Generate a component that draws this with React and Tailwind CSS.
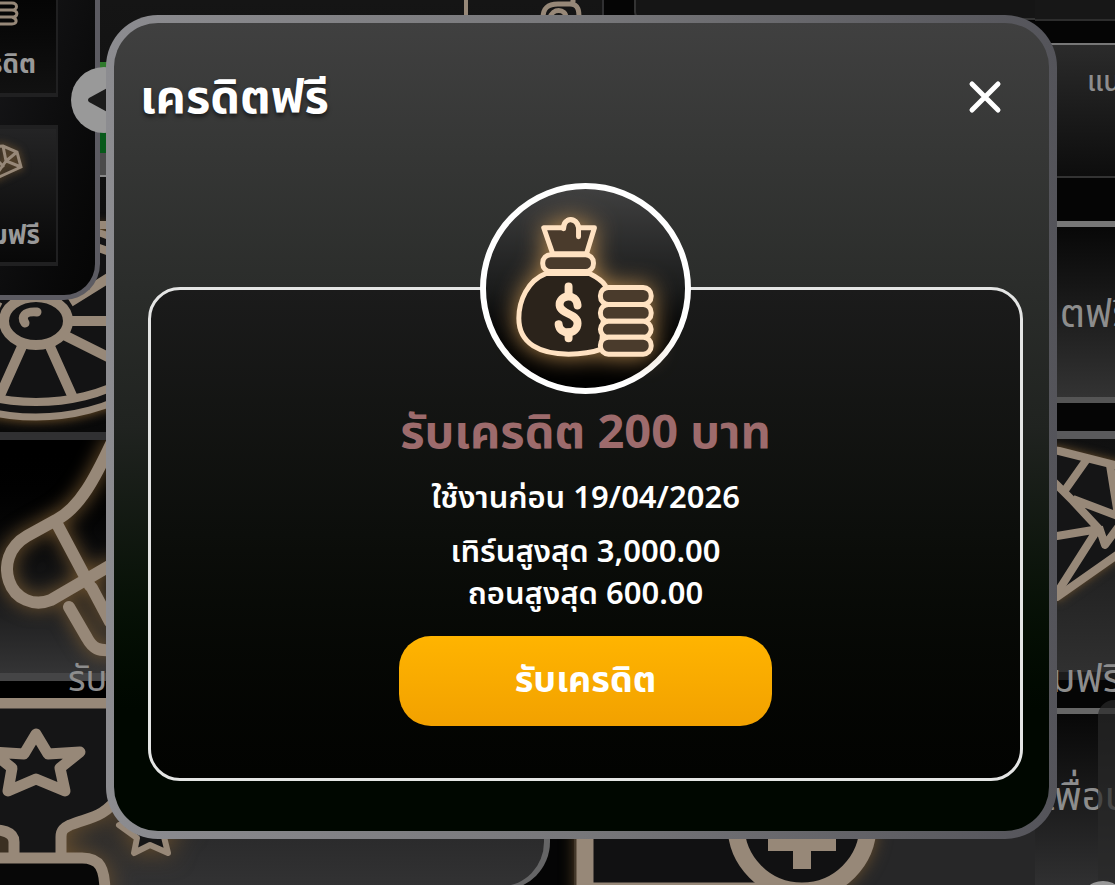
import React from "react";

const details = ["เทิร์นสูงสุด 3,000.00", "ถอนสูงสุด 600.00"];

function MoneyBagIcon() {
  return (
    <svg viewBox="0 0 200 200" className="w-full h-full overflow-visible" aria-hidden="true">
      <g
        className="drop-shadow-[0_0_12px_#b98b50]"
        fill="#4a3b2c"
        stroke="#ffe2c2"
        strokeWidth="5"
        strokeLinecap="round"
        strokeLinejoin="round"
      >
        <path d="M60 85C42 92 33 112 33 130c0 26 22 36 50 36 14 0 25-2 33-5l4-64c-4-6-10-9-16-12z" fill="#2b231b" />
        <path d="M67 65l-9-26h20c0-11 14-11 15 0h16l-8 26z" />
        <path d="M78 40c0-13 14-11 15-1v9" fill="none" />
        <rect x="57" y="66" width="51" height="17" rx="8" />
        <rect x="115" y="99" width="51" height="17" rx="8" />
        <rect x="115" y="116" width="51" height="17" rx="8" />
        <rect x="115" y="133" width="51" height="16" rx="8" />
        <rect x="115" y="149" width="51" height="17" rx="8" />
        <path d="M92 117c-1-13-19-11-18 0 1 9 18 8 18 18 0 12-18 12-19 1" fill="none" strokeWidth="8" />
        <path d="M83 98v8M83 144v6" fill="none" strokeWidth="8" />
      </g>
    </svg>
  );
}

function WheelArt() {
  return (
    <svg viewBox="0 0 110 240" className="w-[110px] h-[240px] overflow-visible" aria-hidden="true">
      <g className="drop-shadow-[0_2px_5px_#5e4524]" fill="#131314" stroke="#978878" strokeWidth="8">
        <path d="M90 33h20M90 55h20" />
        <ellipse cx="36" cy="128" rx="145" ry="97" strokeWidth="7" />
        <ellipse cx="36" cy="128" rx="132" ry="82" />
        <path d="M70 110l45-28M72 129h40M62 142l50 25M48 150l26 58M24 150l-26 58M0 116l-20-10" strokeWidth="10" />
        <ellipse cx="36" cy="129" rx="32" ry="24" strokeWidth="10" />
        <path d="M37 120c-13-1-16 5-12 11" fill="none" strokeWidth="9" strokeLinecap="round" />
      </g>
    </svg>
  );
}

function RevolverArt() {
  return (
    <svg viewBox="0 0 110 240" className="w-[110px] h-[240px] overflow-visible" aria-hidden="true">
      <g
        className="drop-shadow-[0_0_9px_#7d5d33]"
        fill="none"
        stroke="#978878"
        strokeWidth="12"
        strokeLinecap="round"
        strokeLinejoin="round"
      >
        <path d="M112 2C96 36 80 68 56 80L27 96C8 107 4 126 9 141c6 18 25 26 42 19l60-35M56 82l34 64M69 167l18 31c6 11 12 13 24 12M92 148l18 34" />
      </g>
    </svg>
  );
}

function TrophyArt() {
  return (
    <svg viewBox="0 0 200 187" className="w-[200px] h-[187px] overflow-visible" aria-hidden="true">
      <g
        className="drop-shadow-[0_0_12px_#6b502d]"
        fill="#151516"
        stroke="#978878"
        strokeWidth="11"
        strokeLinejoin="round"
      >
        <path d="M-20 5h140v92c-16 23-30 22-50 30-6 3-9 5-9 12v23h-80z" />
        <path d="M14 162v-18c0-10-10-13-34-13v31z" fill="#3b3022" />
        <path d="M-20 160H82c18 0 23 10 23 35H-20z" fill="#070707" />
        <path d="M36 36l12 20 32-2-20 16 5 23-29-12L8 93l4-23-20-16 32 2z" />
        <path d="M149 98l9 25 26 2-20 14 4 16-18-8-16 8 3-15-18-13 23-3z" strokeWidth="6" />
      </g>
    </svg>
  );
}

function DiamondArt() {
  return (
    <svg viewBox="0 0 80 170" className="w-20 h-[170px] overflow-visible" aria-hidden="true">
      <g className="drop-shadow-[0_0_5px_#6b502d]" fill="#151516" stroke="#978878" strokeWidth="8" strokeLinejoin="round">
        <path d="M-20 8l28 4 72 18v76L6 158l-26-30z" />
        <path
          d="M36 20L12 54M2 42l20 20 26 28-54 9M22 60l58 22M59 26l8 50M48 88L6 154M48 88l6 18 22-30"
          fill="none"
        />
      </g>
    </svg>
  );
}

function BadgeArt() {
  return (
    <svg viewBox="0 0 330 60" className="w-[330px] h-[60px] overflow-visible" aria-hidden="true">
      <g className="drop-shadow-[0_0_8px_#6b502d]" fill="#111112" stroke="#978878">
        <path d="M11-20h200V66H11z" strokeWidth="17" />
        <circle cx="228" cy="0" r="66" strokeWidth="17" />
        <path d="M194 17h68M228 10v34" strokeWidth="18" />
      </g>
    </svg>
  );
}

// casino lobby that sits dimmed behind the dialog
function Lobby() {
  return (
    <div className="absolute inset-0 flex gap-6 overflow-hidden bg-[#050505] text-[#8d8d8d]" aria-hidden="true">
      {/* left column */}
      <div className="flex w-[550px] shrink-0 flex-col">
        <div className="flex h-[440px] w-[604px] shrink-0 flex-col justify-between border-r-2 border-b-8 border-[#303032] bg-gradient-to-b from-[#151515] to-[#090909]">
          <div className="flex h-4 items-start justify-end gap-[72px] pr-5">
            <div className="h-4 w-1 bg-[#978878]" />
            <svg viewBox="0 0 42 16" className="h-4 w-[42px] overflow-visible">
              <path d="M3 18C3 8 8 4 18 4h12c9 0 9 8 9 14M10 18c2-10 16-10 16 0M33 0v4" fill="none" stroke="#978878" strokeWidth="5" />
            </svg>
          </div>
          <WheelArt />
        </div>
        <div className="flex h-[241px] shrink-0 overflow-hidden border-b-8 border-[#454546] bg-gradient-to-b from-black to-[#343435]">
          <RevolverArt />
        </div>
        <div className="relative z-10 flex h-[17px] shrink-0 items-end bg-black pl-[68px]">
          <span className="text-4xl leading-9">รับโบนัส</span>
        </div>
        <div className="flex h-[192px] shrink-0 overflow-hidden rounded-br-[48px] border-r-[6px] border-b-4 border-[#656566] bg-gradient-to-b from-[#171718] to-[#323233]">
          <TrophyArt />
        </div>
      </div>

      {/* middle column */}
      <div className="flex min-w-0 flex-1 flex-col justify-between">
        <div className="ml-[60px] h-5 rounded-bl-lg border-b-2 border-l-2 border-[#333] bg-[#151515]" />
        <div className="h-[60px] bg-[#272728]">
          <BadgeArt />
        </div>
      </div>

      {/* right column */}
      <div className="-ml-6 flex w-20 shrink-0 flex-col overflow-hidden">
        <div className="h-[21px] shrink-0 border-b-2 border-[#2d2d2d] bg-[#171717]" />
        <div className="mt-[22px] h-[135px] shrink-0 border-t-2 border-b-2 border-t-[#777] border-b-[#333] bg-gradient-to-b from-[#2b2b2b] to-[#0d0d0d] pt-5 pl-[52px] text-[28px] leading-9 font-medium whitespace-nowrap">
          แนะนำ
        </div>
        <div className="mt-[43px] h-[182px] shrink-0 border-t-6 border-b-6 border-t-[#777] border-b-[#555] bg-gradient-to-b from-[#080808] to-[#333] pt-16 text-[40px] leading-[48px] whitespace-nowrap">
          ดิตฟรี
        </div>
        <div className="mt-7 flex h-[249px] shrink-0 flex-col justify-between border-t-8 border-b-8 border-t-[#5a5a5c] border-b-[#1c1c1c] bg-gradient-to-b from-[#101010] to-[#303030] whitespace-nowrap">
          <div className="pl-4">
            <DiamondArt />
          </div>
          <span className="-mb-8 pl-4 text-[40px] leading-[48px]">มฟรี</span>
        </div>
        <div className="mt-7 flex-1 border-t-6 border-[#666] bg-gradient-to-b from-[#080808] to-[#303031] pt-[60px] pl-2 text-[40px] leading-[48px] whitespace-nowrap">
          เพื่อน
        </div>
      </div>
      <div className="absolute right-0 bottom-0 h-[185px] w-[17px] rounded-tl-2xl bg-[#292929]/70" />
      <div className="absolute -right-3 -bottom-11 size-12 rounded-full bg-[#999]" />
    </div>
  );
}

function SideMenu() {
  return (
    <div className="absolute top-0 left-0 flex" aria-hidden="true">
      <div className="flex h-[300px] w-[100px] flex-col gap-7 overflow-hidden rounded-br-[36px] border-r-[5px] border-b-[5px] border-[#5c5b62] bg-gradient-to-br from-[#171719] to-[#050505] text-[26px] font-bold text-[#999]">
        <div className="flex h-[97px] w-[58px] shrink-0 flex-col items-end justify-between border-r-2 border-b-4 border-[#202021] bg-gradient-to-b from-[#050505] to-[#111] pr-5 pb-3">
          <svg viewBox="0 0 30 26" className="mr-4 h-[26px] w-[30px] shrink-0 overflow-visible">
            <path d="M-10 3h32c6 0 6 7 0 7H-8M22 10c7 1 6 7 0 7H-8M22 17c6 2 5 7 0 7H-8" fill="none" stroke="#978878" strokeWidth="3" />
          </svg>
          <span className="leading-8 whitespace-nowrap">เครดิต</span>
        </div>
        <div className="flex h-[141px] w-[58px] shrink-0 flex-col items-end justify-between border-t-4 border-r-2 border-b-4 border-[#202021] bg-gradient-to-b from-[#242425] to-[#080808] pt-4 pr-4 pb-2">
          <svg viewBox="0 0 30 40" className="mr-4 h-10 w-[30px] shrink-0 overflow-visible drop-shadow-[0_0_4px_#7d5d33]">
            <path d="M-8 2l17-1 14 6 4 15L-6 37M9 1l3 15 15 6M12 16l11-9M12 16L0 33M-8 16l9-3 9 9" fill="none" stroke="#978878" strokeWidth="3" />
          </svg>
          <span className="leading-9 whitespace-nowrap">เกมฟรี</span>
        </div>
      </div>
      <div className="flex w-2 flex-col pt-[62px]">
        <div className="h-[70px] bg-[#2f7a2c]" />
        <div className="h-[21px] bg-[#07591a]" />
        <div className="h-6 border-b-2 border-[#888] bg-[#4b4b4b]" />
      </div>
      <div className="absolute top-[67px] left-[71px] flex size-[66px] items-center rounded-full bg-[#999] pl-4">
        <svg viewBox="0 0 24 32" className="h-8 w-6">
          <path d="M2 14L24 2v28L2 18q-2-2 0-4z" fill="#1b1b1b" />
        </svg>
      </div>
    </div>
  );
}

export default function App() {
  return (
    <div className="relative min-h-screen overflow-hidden bg-black font-['Noto_Sans_Thai','Noto_Sans',sans-serif]">
      <Lobby />
      <SideMenu />

      <main className="relative z-20 pt-[15px] pr-[58px] pb-[46px] pl-[106px]">
        <section
          role="dialog"
          aria-labelledby="dialog-title"
          className="rounded-[52px] bg-gradient-to-r from-[#8c8c90] via-[#77777a] to-[#54545a] p-2"
        >
          <div className="rounded-[44px] bg-gradient-to-b from-[#404040] via-[#202320] via-50% to-[#000700] to-85% pr-[26px] pb-[50px] pl-[34px]">
            <header className="flex h-40 items-start justify-between pt-10">
              <h1 id="dialog-title" className="-ml-2 pt-1 text-[47px] leading-[64px] font-bold text-white [text-shadow:0_3px_4px_#0008]">
                เครดิตฟรี
              </h1>
              <button type="button" aria-label="ปิด" className="mt-4 mr-5 size-9 text-white">
                <svg viewBox="0 0 36 36" className="size-9">
                  <path d="M5 5l26 26M31 5L5 31" stroke="currentColor" strokeWidth="5" strokeLinecap="round" />
                </svg>
              </button>
            </header>

            <div className="mt-[104px] flex flex-col items-center rounded-[32px] border-[3px] border-[#e4e5e4] bg-gradient-to-b from-[#1b1b1b] via-[#0c0e0b] to-[#020301] pb-[52px] text-center text-white">
              <div className="-mt-[107px] size-[211px] rounded-full border-[6px] border-white bg-gradient-to-b from-[#404040] via-[#1b1c1c] to-black">
                <MoneyBagIcon />
              </div>
              <h2 className="mt-2 text-[47px] leading-[64px] font-bold text-[#9d6b6c]">รับเครดิต 200 บาท</h2>
              <p className="mt-3 text-[31px] leading-[42px] font-semibold">ใช้งานก่อน 19/04/2026</p>
              <div className="mt-3 text-[31px] leading-[42px] font-semibold">
                {details.map((line) => (
                  <p key={line}>{line}</p>
                ))}
              </div>
              <button
                type="button"
                className="mt-5 h-[90px] w-[373px] rounded-[32px] bg-gradient-to-b from-[#ffb400] to-[#f2a100] text-4xl font-bold text-white"
              >
                รับเครดิต
              </button>
            </div>
          </div>
        </section>
      </main>
    </div>
  );
}
